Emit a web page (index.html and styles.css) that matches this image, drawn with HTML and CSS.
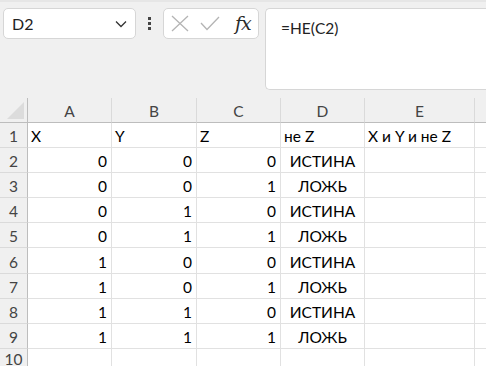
FILE: index.html
```html
<!DOCTYPE html>
<html lang="ru">
<head>
    <meta charset="UTF-8">
    <title>Лист1</title>
    <link rel="stylesheet" href="styles.css">
</head>
<body>
    <div class="formula-bar">
        <div class="name-box">
            <span>D2</span>
            <svg class="chevron" width="12" height="8" viewBox="0 0 12 8"><path d="M1 1.5 L6 6.5 L11 1.5" fill="none" stroke="#333" stroke-width="1.3"/></svg>
        </div>
        <div class="dots"><i></i><i></i><i></i></div>
        <div class="fx-box">
            <svg width="18" height="17" viewBox="0 0 18 17"><path d="M1 1 L17 16 M17 1 L1 16" stroke="#b4b4b4" stroke-width="1.3"/></svg>
            <svg width="20" height="15" viewBox="0 0 20 15"><path d="M1 7 L7 13.5 L19 1" fill="none" stroke="#b4b4b4" stroke-width="1.3"/></svg>
            <span class="fx">fx</span>
        </div>
        <div class="formula-input">=НЕ(C2)</div>
    </div>

    <div class="sheet">
        <div class="corner"><span class="tri"></span></div>
        <div class="col-hdr">A</div>
        <div class="col-hdr">B</div>
        <div class="col-hdr">C</div>
        <div class="col-hdr">D</div>
        <div class="col-hdr">E</div>
        <div class="col-hdr last"></div>

        <div class="row-hdr">1</div>
        <div class="cell">X</div><div class="cell">Y</div><div class="cell">Z</div><div class="cell">не Z</div><div class="cell">X и Y и не Z</div><div class="cell"></div>

        <div class="row-hdr">2</div>
        <div class="cell num">0</div><div class="cell num">0</div><div class="cell num">0</div><div class="cell bool">ИСТИНА</div><div class="cell"></div><div class="cell"></div>

        <div class="row-hdr">3</div>
        <div class="cell num">0</div><div class="cell num">0</div><div class="cell num">1</div><div class="cell bool">ЛОЖЬ</div><div class="cell"></div><div class="cell"></div>

        <div class="row-hdr">4</div>
        <div class="cell num">0</div><div class="cell num">1</div><div class="cell num">0</div><div class="cell bool">ИСТИНА</div><div class="cell"></div><div class="cell"></div>

        <div class="row-hdr">5</div>
        <div class="cell num">0</div><div class="cell num">1</div><div class="cell num">1</div><div class="cell bool">ЛОЖЬ</div><div class="cell"></div><div class="cell"></div>

        <div class="row-hdr">6</div>
        <div class="cell num">1</div><div class="cell num">0</div><div class="cell num">0</div><div class="cell bool">ИСТИНА</div><div class="cell"></div><div class="cell"></div>

        <div class="row-hdr">7</div>
        <div class="cell num">1</div><div class="cell num">0</div><div class="cell num">1</div><div class="cell bool">ЛОЖЬ</div><div class="cell"></div><div class="cell"></div>

        <div class="row-hdr">8</div>
        <div class="cell num">1</div><div class="cell num">1</div><div class="cell num">0</div><div class="cell bool">ИСТИНА</div><div class="cell"></div><div class="cell"></div>

        <div class="row-hdr">9</div>
        <div class="cell num">1</div><div class="cell num">1</div><div class="cell num">1</div><div class="cell bool">ЛОЖЬ</div><div class="cell"></div><div class="cell"></div>

        <div class="row-hdr">10</div>
        <div class="cell"></div><div class="cell"></div><div class="cell"></div><div class="cell"></div><div class="cell"></div><div class="cell"></div>
    </div>
</body>
</html>
```

FILE: styles.css
```css
:root {
    --toolbar-bg: #f0f0f0;
    --box-border: #d6d6d6;
    --grid-line: #e1e1e1;
    --hdr-line: #bdbdbd;
    --hdr-text: #444;
    --cell-font: 'Lato', 'Open Sans', sans-serif;
}

* {
    box-sizing: border-box;
    margin: 0;
    padding: 0;
}

body {
    width: 486px;
    height: 368px;
    overflow: hidden;
    background: #fff;
    font-family: var(--cell-font);
    color: #000;
}

/* formula bar */
.formula-bar {
    height: 98px;
    background: var(--toolbar-bg);
    border-top: 2px solid #e6e6e6;
    display: flex;
    align-items: flex-start;
    padding: 6px 0 0 3px;
}

.name-box {
    width: 133px;
    height: 31px;
    background: #fff;
    border: 1px solid var(--box-border);
    border-radius: 5px;
    display: flex;
    align-items: center;
    justify-content: space-between;
    padding: 0 8px 0 8px;
    font-size: 16px;
    color: #222;
}

.chevron {
    margin-top: 1px;
}

.dots {
    width: 27px;
    height: 31px;
    display: flex;
    flex-direction: column;
    align-items: center;
    justify-content: center;
    gap: 2px;
}

.dots i {
    display: block;
    width: 3px;
    height: 3px;
    background: #444;
}

.fx-box {
    width: 96px;
    height: 31px;
    background: #fff;
    border: 1px solid var(--box-border);
    border-radius: 5px;
    display: flex;
    align-items: center;
    padding: 0 0 0 7px;
    gap: 11px;
}

.fx {
    font-family: 'DejaVu Serif', serif;
    font-style: italic;
    font-size: 19px;
    color: #2a2a2a;
    margin-left: 4px;
    margin-top: -2px;
    letter-spacing: -1px;
}

.formula-input {
    flex: 1;
    height: 82px;
    margin-left: 6px;
    background: #fff;
    border: 1px solid var(--box-border);
    border-right: none;
    border-radius: 5px 0 0 5px;
    padding: 10px 0 0 15px;
    font-size: 15.5px;
    color: #222;
}

/* sheet grid */
.sheet {
    display: grid;
    grid-template-columns: 28px 84px 85px 84px 84px 110px 1fr;
    grid-template-rows: repeat(6, 25px) 26px repeat(3, 25px) 18px;
    height: 268px;
    overflow: hidden;
    font-size: 15.5px;
}

.corner,
.col-hdr {
    background: var(--toolbar-bg);
    border-bottom: 1px solid var(--hdr-line);
    border-right: 1px solid #dadada;
    color: var(--hdr-text);
    display: flex;
    align-items: center;
    justify-content: center;
    padding-top: 2px;
}

.corner {
    border-right: 1px solid var(--hdr-line);
    align-items: flex-end;
    justify-content: flex-end;
    padding: 0 3px 3px 0;
}

.tri {
    width: 0;
    height: 0;
    border-left: 17px solid transparent;
    border-bottom: 17px solid #dcdcdc;
}

.col-hdr.last {
    border-right: none;
}

.row-hdr {
    background: var(--toolbar-bg);
    border-right: 1px solid var(--hdr-line);
    border-bottom: 1px solid #dadada;
    color: var(--hdr-text);
    display: flex;
    align-items: center;
    justify-content: center;
    padding-top: 2px;
}

.cell {
    border-right: 1px solid var(--grid-line);
    border-bottom: 1px solid var(--grid-line);
    display: flex;
    align-items: center;
    padding: 2px 3px 0 3px;
    white-space: nowrap;
}

.cell:nth-child(7n) {
    border-right: none;
}

.cell.num {
    justify-content: flex-end;
    padding-right: 4px;
}

.cell.bool {
    justify-content: center;
}
```
